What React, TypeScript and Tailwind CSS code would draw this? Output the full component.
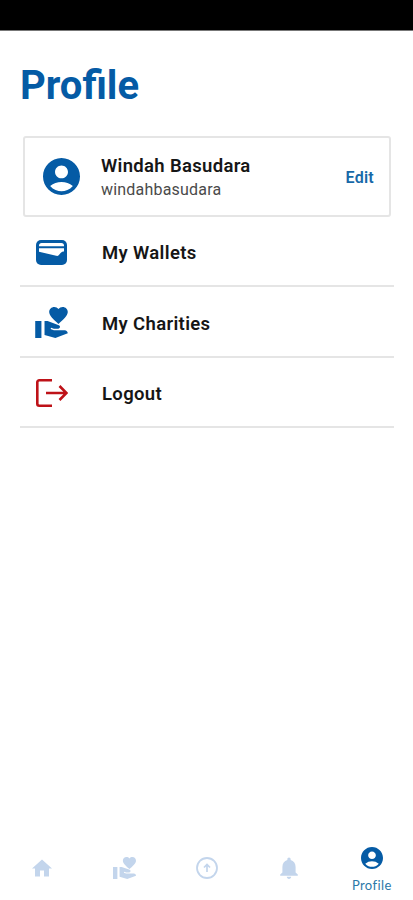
import React from 'react';

type IconProps = { className?: string }

const AccountIcon: React.FC<IconProps> = ({ className }) => (
    <svg viewBox="2 2 20 20" fill="currentColor" className={className}>
        <path d="M12 2C6.48 2 2 6.48 2 12s4.48 10 10 10 10-4.48 10-10S17.52 2 12 2zm0 4c1.93 0 3.5 1.57 3.5 3.5S13.93 13 12 13s-3.5-1.57-3.5-3.5S10.07 6 12 6zm0 14c-2.03 0-4.43-.82-6.14-2.88a9.947 9.947 0 0 1 12.28 0C16.43 19.18 14.03 20 12 20z" />
    </svg>
)

const CharityIcon: React.FC<IconProps> = ({ className }) => (
    <svg viewBox="1 2 21 20" fill="currentColor" className={className}>
        <path d="M1 11h4v11H1zM16 3.25C16.65 2.49 17.66 2 18.7 2 20.55 2 22 3.45 22 5.3c0 2.27-2.91 4.9-6 7.7-3.09-2.81-6-5.44-6-7.7C10 3.45 11.45 2 13.3 2c1.04 0 2.05.49 2.7 1.25z" />
        <path d="M20 17h-7l-2.09-.73.33-.94L13 16h2.82c.65 0 1.18-.53 1.18-1.18 0-.49-.31-.93-.77-1.11L8.97 11H7v9.02L14 22l8.01-3c-.01-1.1-.9-2-2.01-2z" />
    </svg>
)

const WalletIcon: React.FC<IconProps> = ({ className }) => (
    <svg viewBox="0 0 31 25" className={className}>
        <rect width="31" height="25" rx="5" fill="currentColor" />
        <path d="M3 6.2V5.6C3 4 4 3 5.6 3h19.8C27 3 28 4 28 5.6v.6z" fill="white" />
        <path d="M3 8.3h25v3.2c-1.6 0-2.6.5-3.6 1.7l-1.5 1.8c-.7.8-1.6 1.1-2.7.8L3 11.7z" fill="white" />
    </svg>
)

const LogoutIcon: React.FC<IconProps> = ({ className }) => (
    <svg viewBox="0 0 32 28" fill="none" stroke="currentColor" strokeWidth="2.6" className={className}>
        <path d="M16 1.3H3.3a2 2 0 0 0-2 2v21.4a2 2 0 0 0 2 2H16M10 14h20M23.5 7l7 7-7 7" />
    </svg>
)

const HomeIcon: React.FC<IconProps> = ({ className }) => (
    <svg viewBox="2 3 20 18" fill="currentColor" className={className}>
        <path d="M10 20v-6h4v6h5v-8h3L12 3 2 12h3v8z" />
    </svg>
)

const UploadIcon: React.FC<IconProps> = ({ className }) => (
    <svg viewBox="0 0 22 22" fill="none" stroke="currentColor" className={className}>
        <circle cx="11" cy="11" r="10" strokeWidth="1.8" />
        <path d="M11 15V8M8 10.5l3-3 3 3" strokeWidth="1.7" />
    </svg>
)

const BellIcon: React.FC<IconProps> = ({ className }) => (
    <svg viewBox="4 2 16 20" fill="currentColor" className={className}>
        <path d="M12 22c1.1 0 2-.9 2-2h-4c0 1.1.89 2 2 2zm6-6v-5c0-3.07-1.64-5.64-4.5-6.32V4c0-.83-.67-1.5-1.5-1.5s-1.5.67-1.5 1.5v.68C7.63 5.36 6 7.92 6 11v5l-2 2v1h16v-1l-2-2z" />
    </svg>
)

const menu = [
    { id: 'wallets', label: 'My Wallets', icon: <WalletIcon className="ml-px h-[25px] w-[31px] text-[#055ba5]" /> },
    { id: 'charities', label: 'My Charities', icon: <CharityIcon className="h-[31px] w-[33px] text-[#055ba5]" /> },
    { id: 'logout', label: 'Logout', icon: <LogoutIcon className="ml-px h-7 w-8 text-[#be1218]" /> },
]

const tabs = [
    { id: 'home', icon: <HomeIcon className="h-[19px] w-5" /> },
    { id: 'charities', icon: <CharityIcon className="h-[22px] w-[23px]" /> },
    { id: 'upload', icon: <UploadIcon className="size-[22px]" /> },
    { id: 'alerts', icon: <BellIcon className="h-[22px] w-[18px]" /> },
]

const ProfileCard = () => (
    <div className="mx-[3px] flex h-[81px] items-center rounded-[3px] border-2 border-[#e5e5e5] pl-[18px] pr-[15px]">
        <AccountIcon className="size-[37px] text-[#055ba5]" />
        <div className="ml-[21px] flex-1 pt-[2px]">
            <p className="text-[18.5px] font-semibold leading-6 tracking-[0.32px] text-[#161616]">Windah Basudara</p>
            <p className="text-base leading-[23px] tracking-[0.2px] text-[#4a4a4a]">windahbasudara</p>
        </div>
        <button className="pt-0.5 text-base font-semibold tracking-[0.25px] text-[#1769a8]">Edit</button>
    </div>
)

export default function App() {
    return (
        <div className="flex h-[900px] w-full flex-col bg-white font-['Roboto',sans-serif]">
            <div className="h-[31px] border-b border-[#777] bg-black" />
            <main className="flex-1 pl-5 pr-[19px]">
                <h1 className="mb-[26px] mt-[31px] text-[40px] font-bold leading-[48px] text-[#055ba5]">Profile</h1>
                <ProfileCard />
                <ul>
                    {
                        menu.map((m) => (
                            <li key={m.id} className="flex h-[70.3px] items-center border-b-2 border-[#e5e5e5]">
                                <span className="flex w-[82px] pl-[15px] pt-[3px]">{m.icon}</span>
                                <span className="pt-[6px] text-[18.5px] font-semibold tracking-[0.35px] text-[#161616]">{m.label}</span>
                            </li>
                        ))
                    }
                </ul>
            </main>
            <nav className="grid h-[64px] grid-cols-5 pl-px">
                {
                    tabs.map((t) => (
                        <button key={t.id} className="flex items-center justify-center text-[#c3d5ec]">{t.icon}</button>
                    ))
                }
                <button className="flex flex-col items-center pt-[11px] text-[#055ba5]">
                    <AccountIcon className="size-[22px]" />
                    <span className="mt-[7px] font-['Lato',sans-serif] text-[13px] leading-[18px] tracking-[0.4px] text-[#2b78a8]">Profile</span>
                </button>
            </nav>
        </div>
    )
}
